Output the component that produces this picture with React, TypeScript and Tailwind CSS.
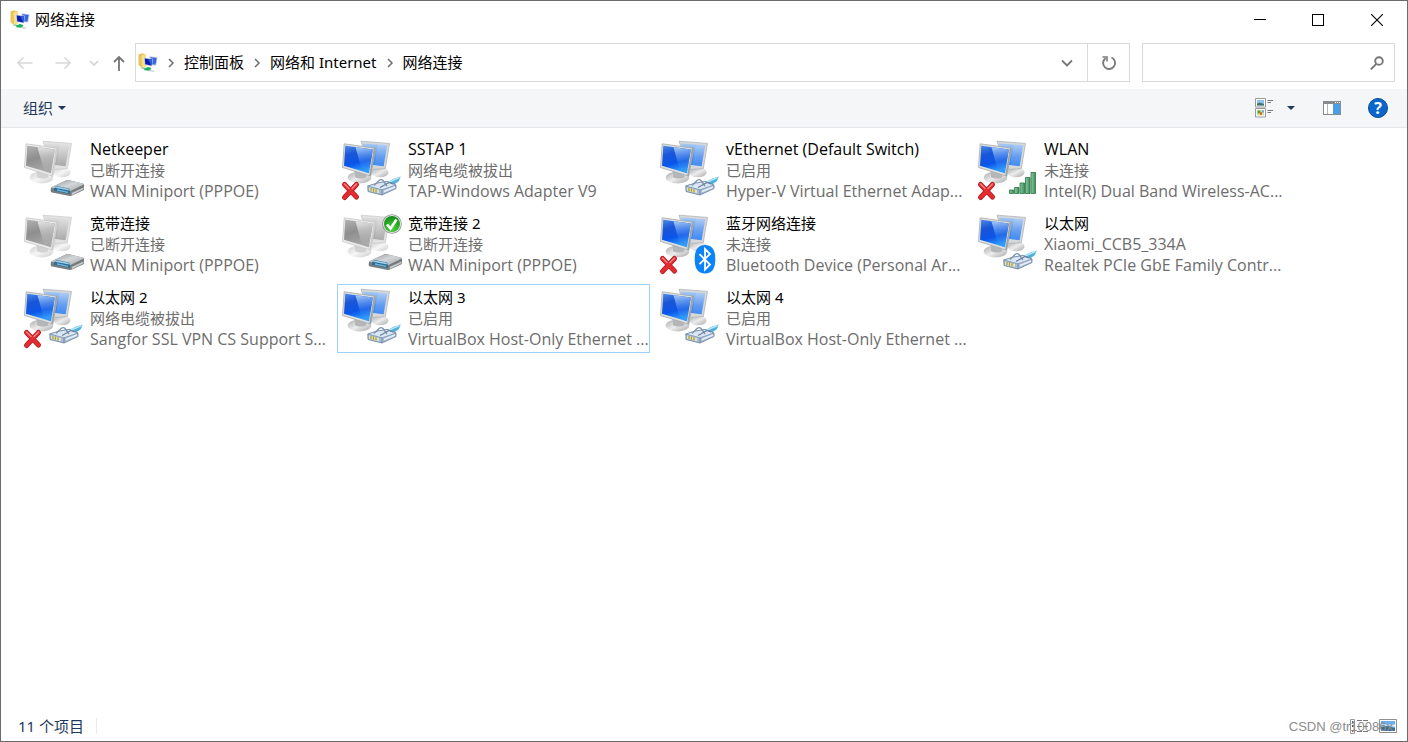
import React from 'react';
import { clsx } from 'clsx';

type Badge = 'modem' | 'cable' | 'signal' | 'bluetooth';

interface Connection {
    name: string;
    status: string;
    device: string;
    badge: Badge;
    offline?: boolean;
    error?: boolean;
    isDefault?: boolean;
    selected?: boolean;
}

const connections: Connection[] = [
    { name: 'Netkeeper', status: '已断开连接', device: 'WAN Miniport (PPPOE)', badge: 'modem', offline: true },
    { name: 'SSTAP 1', status: '网络电缆被拔出', device: 'TAP-Windows Adapter V9', badge: 'cable', error: true },
    { name: 'vEthernet (Default Switch)', status: '已启用', device: 'Hyper-V Virtual Ethernet Adap...', badge: 'cable' },
    { name: 'WLAN', status: '未连接', device: 'Intel(R) Dual Band Wireless-AC...', badge: 'signal', error: true },
    { name: '宽带连接', status: '已断开连接', device: 'WAN Miniport (PPPOE)', badge: 'modem', offline: true },
    { name: '宽带连接 2', status: '已断开连接', device: 'WAN Miniport (PPPOE)', badge: 'modem', offline: true, isDefault: true },
    { name: '蓝牙网络连接', status: '未连接', device: 'Bluetooth Device (Personal Ar...', badge: 'bluetooth', error: true },
    { name: '以太网', status: 'Xiaomi_CCB5_334A', device: 'Realtek PCIe GbE Family Contr...', badge: 'cable' },
    { name: '以太网 2', status: '网络电缆被拔出', device: 'Sangfor SSL VPN CS Support S...', badge: 'cable', error: true },
    { name: '以太网 3', status: '已启用', device: 'VirtualBox Host-Only Ethernet ...', badge: 'cable', selected: true },
    { name: '以太网 4', status: '已启用', device: 'VirtualBox Host-Only Ethernet ...', badge: 'cable' },
];

// Latin-only lines are set one size up so they sit evenly beside the Chinese ones
const isLatin = (text: string) => /^[\x20-\x7e]+$/.test(text);

// Gradients shared by every connection icon
function IconDefs() {
    return (
        <svg width="0" height="0" className="absolute" aria-hidden="true">
            <defs>
                <linearGradient id="screen-on" x1="0" y1="0" x2="0.3" y2="1">
                    <stop offset="0" stopColor="#4a8ae8" />
                    <stop offset="0.35" stopColor="#1a55d6" />
                    <stop offset="0.7" stopColor="#0a55ea" />
                    <stop offset="1" stopColor="#2f9bfc" />
                </linearGradient>
                <linearGradient id="shine-on" x1="0" y1="0" x2="0.1" y2="1">
                    <stop offset="0" stopColor="#a9cdf6" />
                    <stop offset="0.6" stopColor="#2f74ea" stopOpacity="0.6" />
                    <stop offset="1" stopColor="#35a0ff" stopOpacity="0.2" />
                </linearGradient>
                <linearGradient id="back-on" x1="0" y1="0" x2="0" y2="1">
                    <stop offset="0" stopColor="#a9cbf3" />
                    <stop offset="0.6" stopColor="#4a8dee" />
                    <stop offset="1" stopColor="#2178f5" />
                </linearGradient>
                <linearGradient id="screen-off" x1="0" y1="0" x2="0.3" y2="1">
                    <stop offset="0" stopColor="#b2b2b2" />
                    <stop offset="0.5" stopColor="#8e8e8e" />
                    <stop offset="1" stopColor="#a8a8a8" />
                </linearGradient>
                <linearGradient id="shine-off" x1="0" y1="0" x2="0.1" y2="1">
                    <stop offset="0" stopColor="#e4e4e4" />
                    <stop offset="1" stopColor="#a8a8a8" stopOpacity="0.3" />
                </linearGradient>
                <linearGradient id="back-off" x1="0" y1="0" x2="0" y2="1">
                    <stop offset="0" stopColor="#dedede" />
                    <stop offset="1" stopColor="#9c9c9c" />
                </linearGradient>
                <linearGradient id="stand" x1="0" y1="0" x2="1" y2="1">
                    <stop offset="0" stopColor="#a9a9a9" />
                    <stop offset="0.5" stopColor="#ececec" />
                    <stop offset="1" stopColor="#a6a6a6" />
                </linearGradient>
                <linearGradient id="stand-off" x1="0" y1="0" x2="1" y2="1">
                    <stop offset="0" stopColor="#cfcfcf" />
                    <stop offset="0.5" stopColor="#f6f6f6" />
                    <stop offset="1" stopColor="#cacaca" />
                </linearGradient>
                <linearGradient id="modem-top" x1="0" y1="0" x2="1" y2="1">
                    <stop offset="0" stopColor="#8d9295" />
                    <stop offset="0.5" stopColor="#d3d6d8" />
                    <stop offset="1" stopColor="#a5a9ab" />
                </linearGradient>
                <linearGradient id="bars" x1="0" y1="0" x2="1" y2="0">
                    <stop offset="0" stopColor="#8cc9a0" />
                    <stop offset="1" stopColor="#3c8f5a" />
                </linearGradient>
                <radialGradient id="tick" cx="0.5" cy="0.8" r="0.8">
                    <stop offset="0" stopColor="#4fd23c" />
                    <stop offset="1" stopColor="#118a18" />
                </radialGradient>
            </defs>
        </svg>
    );
}

function Monitors({ offline }: { offline?: boolean }) {
    const stand = offline ? 'url(#stand-off)' : 'url(#stand)';
    return (
        <g>
            <ellipse cx="40" cy="33.5" rx="8.5" ry="4.8" fill={stand} />
            <path d="M21 2.2 49.5 4.4 45.3 29.7 30 30.5Z" fill={offline ? '#e2e2e2' : '#d6d8da'} stroke={offline ? '#c9c9c9' : '#a9adb0'} strokeWidth="0.7" />
            <path d="M23 4.4 47.2 6.2 43.6 27.2 26 25Z" fill={offline ? 'url(#back-off)' : 'url(#back-on)'} />
            <path d="M38 5.5 47.2 6.2 43.6 27.2 34 26Z" fill="#fff" opacity="0.14" />
            <path d="M14.5 30h11.5l1.5 8c-3 3-9 3-13 0Z" fill={offline ? '#dadada' : '#b9bbbd'} />
            <ellipse cx="19.5" cy="38.5" rx="11.8" ry="6" fill={stand} />
            <path d="M15 33h10.5l1 5c-3 2-8.500 2-11.500 0Z" fill={offline ? '#d2d2d2' : '#b4b6b8'} />
            <path d="M4.2 4.8 35.5 9.2 30.8 37.2 2.5 28.5Z" fill={offline ? '#ebebeb' : '#dcdedf'} stroke={offline ? '#c6c6c6' : '#a5a9ac'} strokeWidth="0.8" />
            <path d="M33.8 9 35.5 9.2 30.8 37.2 29.2 36.7Z" fill={offline ? '#cfcfcf' : '#9ea3a6'} />
            <path d="M5.3 6.7 32.8 10.6 28.9 34.2 4 26.8Z" fill={offline ? 'url(#screen-off)' : 'url(#screen-on)'} />
            <path d="M15.5 8.2 32.8 10.6 28.9 34.2 22 32.1Z" fill={offline ? 'url(#shine-off)' : 'url(#shine-on)'} />
        </g>
    );
}

function BadgeShape({ badge }: { badge: Badge }) {
    if (badge === 'modem') {
        return (
            <g>
                <path d="M29 48.5 44 41.5c1-.4 2-.5 3-.3l13.500 3.300c1 .3 1.500 1 1.500 2v4.500L50 56.500c-1 .5-2 .5-3.500.2L30 53.500c-1-.3-1.300-1-1.300-2Z" fill="#777c7f" />
                <path d="M29 48.3 44 41.5c1-.4 2-.5 3-.3l13.500 3.300c1.200.3 1.200 1 .2 1.500L49 51.800c-1 .5-2 .4-3 .2l-16-3Z" fill="url(#modem-top)" />
                <path d="M32 49.4 34.5 47l12.500 2.500 1 2.500v3l-16-3.200Z" fill="#2f6f95" />
                <path d="M34.5 47.5 46.5 49.8 47.5 51.5 33 48.8Z" fill="#9fd3ee" />
                <path d="M35 51 46 53.3" stroke="#74b4d8" strokeWidth="1.3" />
                <path d="M49.5 54 61.5 48.5v1.8L50 56Z" fill="#c9cccd" />
            </g>
        );
    }
    if (badge === 'cable') {
        return (
            <g strokeLinejoin="round">
                <path d="M47 43.5 53 40 60.7 37.5 59 42 52 47Z" fill="#4fb0da" />
                <path d="M49 43 59.5 38.5" stroke="#b5e6f7" strokeWidth="1.5" />
                <path d="M27.8 47 38 44 47 42.5 56 46 56 49.5 42 56 28 52.5Z" fill="#a9bdd6" stroke="#667d9a" strokeWidth="0.8" />
                <path d="M27.8 47 38 44 47 42.5 56 46 42 50.8Z" fill="#dbe7f4" stroke="#7189a7" strokeWidth="0.7" />
                <path d="M42 50.8V56" stroke="#667d9a" strokeWidth="0.8" />
                <path d="M34 46.5 39 41.5c1.5-1.3 3-1.3 4 0l4 5.5" fill="none" stroke="#8094ad" strokeWidth="1.3" />
                <path d="M40 48.5 49 43.5 53 45" fill="none" stroke="#667f9e" strokeWidth="1.2" />
                <path d="M29 48.5 39 51v3.3L29 51.8Z" fill="#dfe3c4" />
                <path d="M31 49v3M33.5 49.5v3.2M36 50.2v3.4" stroke="#a89a35" strokeWidth="1.2" />
                <path d="M44 52.5 55 48" stroke="#e8f1fa" strokeWidth="1.5" />
            </g>
        );
    }
    if (badge === 'signal') {
        return (
            <g fill="url(#bars)" stroke="#2c7446" strokeWidth="0.8">
                <path d="M33.5 51h4v3.5h-4Z" />
                <path d="M38.5 48.5h4.5v6h-4.5Z" />
                <path d="M44 44h4.5v10.5H44Z" />
                <path d="M49.5 38.5h4.5v16h-4.5Z" />
                <path d="M55 33.5h4.5v21H55Z" />
            </g>
        );
    }
    return (
        <g>
            <path d="M47 32c7.5 0 10.3 5.5 10.3 14.2S54.5 60.5 47 60.5 36.7 55 36.7 46.2 39.5 32 47 32Z" fill="#0a84f8" />
            <path d="M41.5 41.2 52 51.5 47 56.5V36l5 5L41.5 51.2" fill="none" stroke="#fff" strokeWidth="1.8" />
        </g>
    );
}

function ConnectionIcon({ item }: { item: Connection }) {
    return (
        <svg viewBox="0 0 64 63" className="w-16 h-[63px] flex-none" aria-hidden="true">
            <Monitors offline={item.offline} />
            <BadgeShape badge={item.badge} />
            {item.error && (
                <g strokeLinecap="round">
                    <path d="M4.500 45.500 16.500 58M16.500 45.500 4.500 58.500" stroke="#b3161d" strokeWidth="5" />
                    <path d="M4.500 45.500 16.500 58M16.500 45.500 4.500 58.500" stroke="#e42b30" strokeWidth="3.6" />
                    <path d="M4.500 45 9 49.500M16.500 45 12 49.500" stroke="#f58a8a" strokeWidth="1.3" />
                </g>
            )}
            {item.isDefault && (
                <g>
                    <circle cx="52" cy="11" r="9.8" fill="#8f9492" />
                    <circle cx="52" cy="11" r="9" fill="#e4e8e4" />
                    <circle cx="52" cy="11" r="8" fill="url(#tick)" />
                    <path d="M47 11.5 50.5 15.5 56.5 6.5" fill="none" stroke="#fff" strokeWidth="2.6" />
                </g>
            )}
        </svg>
    );
}

function FolderIcon() {
    return (
        <svg viewBox="0 0 20 20" className="w-5 h-5 flex-none" aria-hidden="true">
            <path d="M0.5 1.5 4 0.3 7.5 1.5v12L4 15 0.5 12Z" fill="#e9c45c" />
            <path d="M3.5 2.5 8 1.2v12.500L4 15Z" fill="#f8e08f" />
            <path d="M11.5 3.3 19.5 4.2 18.3 12.5l-6.5-.5Z" fill="#b9c3dc" />
            <path d="M12.5 4.3 18.5 5l-1 6.5-5-.3Z" fill="#3468de" />
            <path d="M6 4.6 15 5.8 14 13.5 6.5 12Z" fill="#c3cbde" />
            <path d="M6.8 5.6 14.2 6.6 13.3 12.5 7.2 11.2Z" fill="#0a1cae" />
            <path d="M10 6 14.2 6.6 13.3 12.5Z" fill="#2b5ce4" />
            <path d="M3.5 15 13 16.2" stroke="#9cc7ac" strokeWidth="1.5" />
            <path d="M6 15.8 10 14 13.5 15 11 17.7 6.5 17.2Z" fill="#17b35a" />
            <path d="M11 17.7 16 18.2" stroke="#b9c2c0" strokeWidth="1" />
        </svg>
    );
}

function Crumb({ label }: { label: string }) {
    return (
        <>
            <svg viewBox="0 0 8 10" className="w-2 h-2.5 flex-none" fill="none" stroke="#6e6e6e" strokeWidth="1.5" aria-hidden="true">
                <path d="M2 1 6 5 2 9" />
            </svg>
            <a href="#" className="whitespace-nowrap">{label}</a>
        </>
    );
}

function TitleBar() {
    return (
        <header className="flex h-[37px] items-center justify-between">
            <div className="flex items-center gap-[5px] pl-[9px]">
                <FolderIcon />
                <h1>网络连接</h1>
            </div>
            <div className="flex h-full">
                <button aria-label="Minimize" className="flex w-[58px] items-center justify-center">
                    <svg viewBox="0 0 12 12" className="size-3" shapeRendering="crispEdges"><path d="M0 5h12v1H0Z" /></svg>
                </button>
                <button aria-label="Maximize" className="flex w-[58px] items-center justify-center">
                    <span className="size-3 border border-black" />
                </button>
                <button aria-label="Close" className="flex w-[60px] items-center justify-center">
                    <svg viewBox="0 0 12 12" className="size-3" stroke="#000" strokeWidth="1.1"><path d="M0 0 12 12M12 0 0 12" /></svg>
                </button>
            </div>
        </header>
    );
}

function AddressRow() {
    return (
        <nav className="flex h-[51px] items-start pt-[5px] pr-3">
            <div className="flex h-[39px] w-[134px] flex-none items-center pl-4">
                <button aria-label="Back" className="w-4">
                    <svg viewBox="0 0 16 14" className="w-4" fill="none" stroke="#d9d9d9" strokeWidth="1.7"><path d="M15.5 7H1M6.5 1.5 1 7l5.5 5.5" /></svg>
                </button>
                <button aria-label="Forward" className="ml-[22px] w-4">
                    <svg viewBox="0 0 16 14" className="w-4" fill="none" stroke="#d9d9d9" strokeWidth="1.7"><path d="M0.5 7H15M9.5 1.5 15 7l-5.5 5.5" /></svg>
                </button>
                <button aria-label="Recent locations" className="ml-[18px] w-2.5">
                    <svg viewBox="0 0 10 8" className="w-2.5" fill="none" stroke="#d4d4d4" strokeWidth="1.7"><path d="M1 2 5 6l4-4" /></svg>
                </button>
                <button aria-label="Up" className="ml-3.5 w-3">
                    <svg viewBox="0 0 12 16" className="w-3" fill="none" stroke="#757575" strokeWidth="1.8"><path d="M6 16V2M1 7l5-5 5 5" /></svg>
                </button>
            </div>
            <div className="flex h-[39px] flex-1 items-center border border-[#d9d9d9]">
                <div className="flex flex-1 items-center gap-[9px] pl-[2px]">
                    <FolderIcon />
                    <Crumb label="控制面板" />
                    <Crumb label="网络和 Internet" />
                    <Crumb label="网络连接" />
                </div>
                <button aria-label="Previous locations" className="flex h-full w-10 items-center justify-center">
                    <svg viewBox="0 0 12 8" className="w-3" fill="none" stroke="#777" strokeWidth="1.8"><path d="M1 1.5 6 6.5l5-5" /></svg>
                </button>
                <button aria-label="Refresh" className="flex h-full w-[42px] items-center justify-center border-l border-[#d9d9d9]">
                    <svg viewBox="0 0 16 16" className="w-4" fill="none" stroke="#7a7a7a" strokeWidth="1.9">
                        <path d="M10.5 2.5A6 6 0 1 1 4.5 3.2" />
                        <path d="M1.5 2H6v4.5" strokeWidth="1.6" />
                    </svg>
                </button>
            </div>
            <div className="ml-3 flex h-[39px] w-[253px] items-center border border-[#d9d9d9] pr-2.5">
                <input type="search" aria-label="Search" className="h-full min-w-0 flex-1 pl-2 outline-none" />
                <svg viewBox="0 0 14 14" className="w-3.5" fill="none" stroke="#757575" strokeWidth="1.9" aria-hidden="true">
                    <circle cx="9" cy="5" r="3.8" />
                    <path d="M6.3 7.800.8 13.3" />
                </svg>
            </div>
        </nav>
    );
}

function Toolbar() {
    return (
        <div className="flex h-[39px] items-center border-b border-[#e4e6ea] bg-[#f5f6f8] pr-[19px] pl-[22px]">
            <button className="flex items-center gap-[5px] text-[#1e395b]">
                组织
                <svg viewBox="0 0 8 4" className="w-2" fill="#1e395b"><path d="M0 0h8L4 4Z" /></svg>
            </button>
            <div className="ml-auto flex items-center">
                <button aria-label="Change view" className="flex items-center gap-3.5">
                    <svg viewBox="0 0 18 20" className="w-[18px]">
                        <path d="M.5.5h10v8.5H.5ZM.5 10.5h10V19H.5Z" fill="#fff" stroke="#9a9a9a" />
                        <path d="M2 2h7v5.5H2Z" fill="#8fc0ee" />
                        <path d="M2 5.5 5 4.8 9 6v1.5H2Z" fill="#3b7466" />
                        <path d="M2 12h7v5.5H2Z" fill="#d5e0a8" />
                        <path d="M2.5 12.5h3v3h-3Z" fill="#5fa33f" />
                        <path d="M5 14h2v3H5Z" fill="#d6742c" />
                        <path d="M7 12.5h2v2H7Z" fill="#6f9fd8" />
                        <path d="M12.5 2.5H18M12.5 4.5H16M12.5 12.5H18M12.5 14.5H16" stroke="#777" />
                    </svg>
                    <svg viewBox="0 0 8 4" className="w-2" fill="#1e395b"><path d="M0 0h8L4 4Z" /></svg>
                </button>
                <button aria-label="Preview pane" className="ml-7">
                    <svg viewBox="0 0 18 14" className="w-[18px]" shapeRendering="crispEdges">
                        <path d="M0 0h18v14H0Z" fill="#868b90" />
                        <path d="M1 3h16v10H1Z" fill="#fff" />
                        <path d="M4 3h1v10H4Z" fill="#b5b5b5" />
                        <path d="M10 3h7v10h-7Z" fill="#4b9fe6" />
                        <path d="M12 1h1v1h-1ZM14 1h1v1h-1ZM16 1h1v1h-1Z" fill="#fff" />
                    </svg>
                </button>
                <button aria-label="Help" className="ml-[27px] flex size-5 items-center justify-center rounded-full border border-[#0a4a94] bg-[#0a66cc] text-base leading-none font-bold text-white">
                    ?
                </button>
            </div>
        </div>
    );
}

function StatusBar() {
    return (
        <footer className="flex h-[30px] items-center justify-between pr-2.5 pl-[17px] text-[#1e395b]">
            <span className="border-r border-[#ececec] pr-3 leading-4">11 个项目</span>
            <div className="relative flex items-center gap-2.5">
                <button aria-label="Details">
                    <svg viewBox="0 0 19 15" className="w-[19px]">
                        <path d="M.5.5h4v14h-4Z" fill="#fff" stroke="#999" />
                        <path d="M2 2h1.5v2H2Z" fill="#2f6fc4" />
                        <path d="M2 6h1.5v2H2Z" fill="#555" />
                        <path d="M2 11h1.5v2H2Z" fill="#c43a2f" />
                        <path d="M7 1.5h5M13 1.5h5M7 7.5h5M13 7.5h5M7 12.5h5M13 12.5h5" stroke="#777" />
                    </svg>
                </button>
                <button aria-label="Large icons">
                    <svg viewBox="0 0 18 14" className="w-[18px]">
                        <path d="M.5.5h17v13H.5Z" fill="#fff" stroke="#8f8f8f" />
                        <path d="M2 2h14v10H2Z" fill="#6cb0ee" />
                        <path d="M2 5.5h14v2.5L9 6.5 2 8Z" fill="#d6ebfb" />
                        <path d="M2 8 7 7l9 2v3H2Z" fill="#3d7186" />
                        <path d="M2 10.5h14V12H2Z" fill="#2c6fb8" />
                    </svg>
                </button>
                <span className="absolute right-1 font-['Liberation_Sans',sans-serif] text-[13px] whitespace-nowrap text-[#8c8c8c]">CSDN @tr10086x</span>
            </div>
        </footer>
    );
}

export default function App() {
    return (
        <div className="flex min-h-screen flex-col border border-[#6b6b6b] bg-white font-['Noto_Sans','Noto_Sans_CJK_SC',sans-serif] text-[15px] leading-[21px] text-black select-none">
            <IconDefs />
            <TitleBar />
            <AddressRow />
            <Toolbar />
            <main className="flex-1 pt-2 pl-[18px]">
                <ul className="grid grid-cols-[repeat(auto-fill,313px)] gap-[5px]">
                    {connections.map((item) => (
                        <li
                            key={item.name}
                            className={clsx('flex gap-1 border p-[2px]', item.selected ? 'border-[#99d1ff]' : 'border-transparent')}
                        >
                            <ConnectionIcon item={item} />
                            <div className="min-w-0 whitespace-nowrap text-[#6d6d6d]">
                                {[item.name, item.status, item.device].map((line, i) => (
                                    <p
                                        key={i}
                                        className={clsx(
                                            'leading-[21px]',
                                            isLatin(line) && "font-['Open_Sans',sans-serif] text-[16px]",
                                            i === 0 && 'text-black'
                                        )}
                                    >
                                        {line}
                                    </p>
                                ))}
                            </div>
                        </li>
                    ))}
                </ul>
            </main>
            <StatusBar />
        </div>
    );
}
